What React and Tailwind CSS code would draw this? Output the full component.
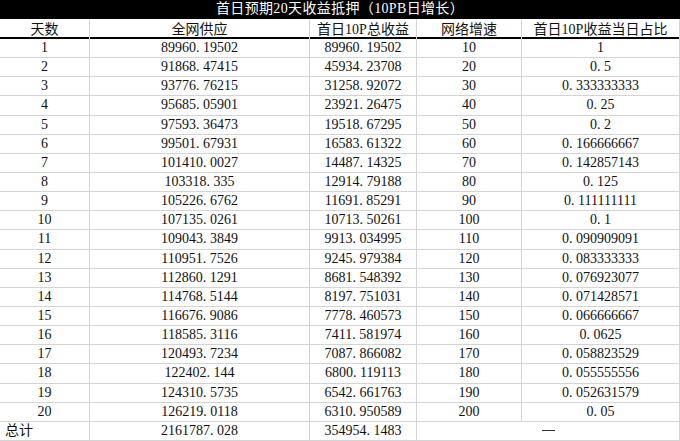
const rows = [
["1","89960.19502","89960.19502","10","1"],
["2","91868.47415","45934.23708","20","0.5"],
["3","93776.76215","31258.92072","30","0.333333333"],
["4","95685.05901","23921.26475","40","0.25"],
["5","97593.36473","19518.67295","50","0.2"],
["6","99501.67931","16583.61322","60","0.166666667"],
["7","101410.0027","14487.14325","70","0.142857143"],
["8","103318.335","12914.79188","80","0.125"],
["9","105226.6762","11691.85291","90","0.111111111"],
["10","107135.0261","10713.50261","100","0.1"],
["11","109043.3849","9913.034995","110","0.090909091"],
["12","110951.7526","9245.979384","120","0.083333333"],
["13","112860.1291","8681.548392","130","0.076923077"],
["14","114768.5144","8197.751031","140","0.071428571"],
["15","116676.9086","7778.460573","150","0.066666667"],
["16","118585.3116","7411.581974","160","0.0625"],
["17","120493.7234","7087.866082","170","0.058823529"],
["18","122402.144","6800.119113","180","0.055555556"],
["19","124310.5735","6542.661763","190","0.052631579"],
["20","126219.0118","6310.950589","200","0.05"],
];
const f = (s) => s.replace(".", ". ");
const cols = "grid grid-cols-[90px_220px_107px_105px_158px] flex-1 min-h-0";
const cell = "border-r border-b border-[#d4d4d4] flex items-center justify-center leading-none whitespace-pre";
export default function App() {
  return (
    <div className="w-[680px] h-[441px] bg-white text-[14px] text-[#111] overflow-hidden flex flex-col" style={{fontFamily:'"Liberation Serif","Noto Sans CJK SC",serif'}}>
      <div className="h-[19px] shrink-0 bg-black text-white flex items-center justify-center border-b-2 border-black tracking-wide">首日预期20天收益抵押（10PB日增长）</div>
      <div className={"grid grid-cols-[90px_220px_107px_105px_158px] shrink-0 h-[20px] border-b-2 border-black"}>
        {["天数","全网供应","首日10P总收益","网络增速","首日10P收益当日占比"].map((h,i)=>(
          <div key={i} className="border-r border-[#d4d4d4] flex items-center justify-center">{h}</div>
        ))}
      </div>
      {rows.map((r,i)=>(
        <div key={i} className={cols}>
          {r.map((c,j)=>(<div key={j} className={cell}>{j===0||j===3?c:f(c)}</div>))}
        </div>
      ))}
      <div className={cols}>
        <div className={cell + " justify-start pl-[5px]"}>总计</div>
        <div className={cell}>{f("2161787.028")}</div>
        <div className={cell}>{f("354954.1483")}</div>
        <div className={cell + " col-span-2"}><span className="inline-block w-[13px] h-px bg-[#333]"></span></div>
      </div>
    </div>
  );
}
